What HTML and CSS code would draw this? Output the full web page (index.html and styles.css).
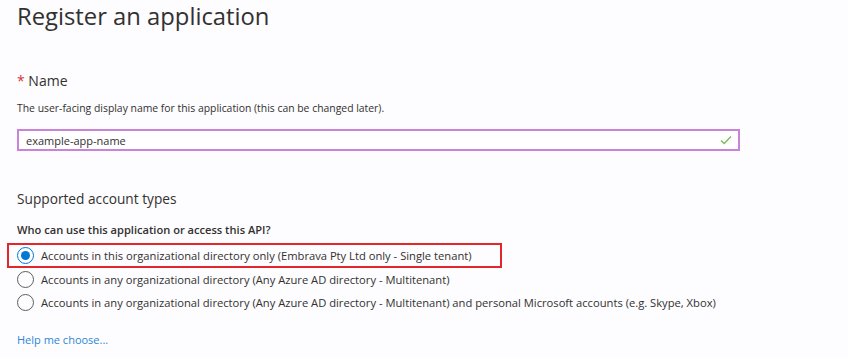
FILE: index.html
```html
<!DOCTYPE html>
<html lang="en">
<head>
  <meta charset="UTF-8">
  <meta name="viewport" content="width=device-width, initial-scale=1.0">
  <title>Register an application</title>
  <link rel="stylesheet" href="styles.css">
</head>
<body>
<div class="page">
  <h1 class="page-title">Register an application</h1>

  <div class="field">
    <div class="field-label"><span class="required">*</span> Name</div>
    <div class="field-help">The user-facing display name for this application (this can be changed later).</div>
    <div class="text-input">
      <span class="input-value">example-app-name</span>
      <svg class="check-icon" width="12" height="10" viewBox="0 0 12 10">
        <path d="M1 5.5 L4.2 8.5 L11 1.5" fill="none" stroke="#7cbb5c" stroke-width="1.4"/>
      </svg>
    </div>
  </div>

  <div class="section">
    <h2 class="section-title">Supported account types</h2>
    <div class="question">Who can use this application or access this API?</div>
    <div class="options">
      <div class="option highlighted">
        <span class="radio checked"></span>
        <span>Accounts in this organizational directory only (Embrava Pty Ltd only - Single tenant)</span>
      </div>
      <div class="option">
        <span class="radio"></span>
        <span>Accounts in any organizational directory (Any Azure AD directory - Multitenant)</span>
      </div>
      <div class="option">
        <span class="radio"></span>
        <span>Accounts in any organizational directory (Any Azure AD directory - Multitenant) and personal Microsoft accounts (e.g. Skype, Xbox)</span>
      </div>
    </div>
    <a class="help-link" href="#">Help me choose...</a>
  </div>
</div>
</body>
</html>
```

FILE: styles.css
```css
* {
  margin: 0;
  padding: 0;
  box-sizing: border-box;
  font-family: 'Open Sans', 'Noto Sans', sans-serif;
}

body {
  background-color: #fdfcfe;
  color: #323130;
}

.page {
  padding: 0 0 0 17px;
  width: 848px;
  height: 358px;
  overflow: hidden;
}

.page-title {
  font-size: 23.8px;
  font-weight: 400;
  line-height: 32px;
  color: #323130;
}

.field {
  margin-top: 38px;
}

.field-label {
  font-size: 14px;
  line-height: 22px;
}

.required {
  color: #d13438;
}

.field-help {
  font-size: 10.4px;
  line-height: 18px;
  margin-top: 7px;
}

.text-input {
  width: 723px;
  height: 22px;
  margin-top: 12px;
  border: 2px solid #c784d8;
  display: flex;
  align-items: center;
  justify-content: space-between;
  padding: 0 6px 0 7px;
  background-color: #fff;
}

.input-value {
  font-size: 11px;
}

.section {
  margin-top: 37px;
}

.section-title {
  font-size: 13.7px;
  font-weight: 400;
  line-height: 22px;
}

.question {
  font-size: 11.1px;
  font-weight: 600;
  line-height: 18px;
  margin-top: 11px;
}

.options {
  display: flex;
  flex-direction: column;
  align-items: flex-start;
  margin-top: 4px;
}

.option {
  display: flex;
  align-items: center;
  gap: 7px;
  height: 23px;
  font-size: 11.2px;
}

.option.highlighted {
  height: 25px;
  margin-left: -10px;
  padding: 0 28px 0 8px;
  border: 2px solid #e3262b;
}

.radio {
  width: 17px;
  height: 17px;
  border: 1px solid #605e5c;
  border-radius: 50%;
  display: flex;
  align-items: center;
  justify-content: center;
  flex-shrink: 0;
}

.radio.checked {
  border-color: #0078d4;
}

.radio.checked::after {
  content: "";
  width: 9px;
  height: 9px;
  border-radius: 50%;
  background-color: #0078d4;
}

.help-link {
  display: inline-block;
  margin-top: 17px;
  font-size: 11px;
  line-height: 18px;
  color: #2b88d8;
  text-decoration: none;
}
```
